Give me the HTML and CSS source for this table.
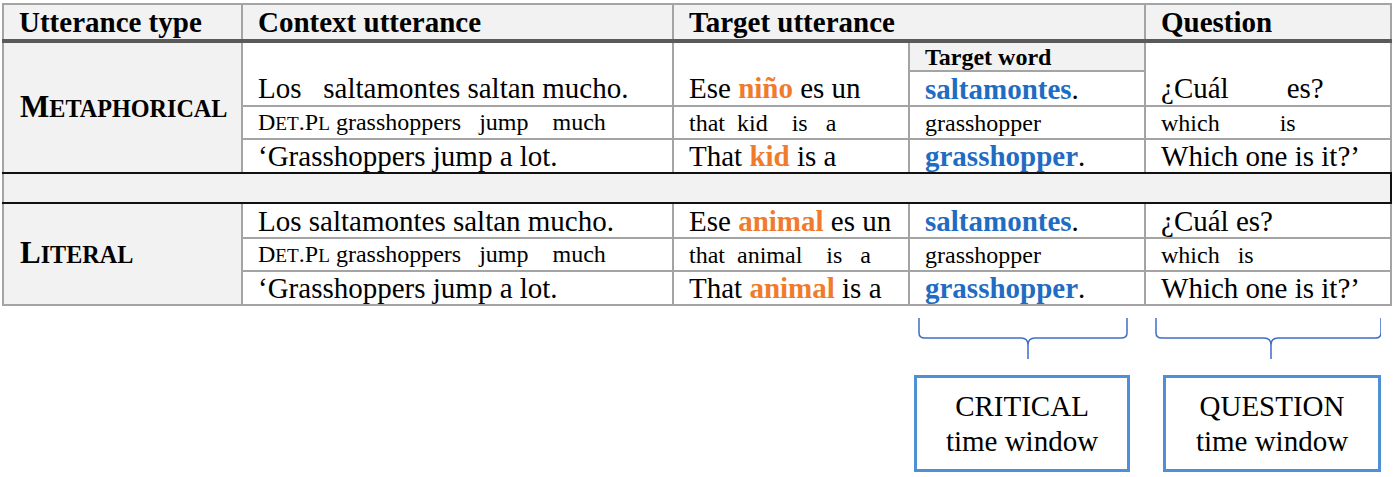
FILE: index.html
```html
<!DOCTYPE html>
<html lang="en">
<head>
<meta charset="utf-8">
<title>Utterance types</title>
<link rel="stylesheet" href="styles.css">
</head>
<body>
<div class="page">
  <table class="grid">
    <colgroup>
      <col class="c1"><col class="c2"><col class="c3"><col class="c4"><col class="c5">
    </colgroup>
    <thead>
      <tr class="r-head">
        <th>Utterance type</th>
        <th>Context utterance</th>
        <th colspan="2">Target utterance</th>
        <th>Question</th>
      </tr>
    </thead>
    <tbody>
      <tr class="r-m1a">
        <td rowspan="4" class="label last">M<span class="sc">ETAPHORICAL</span></td>
        <td rowspan="2" class="big bottom">Los   saltamontes saltan mucho.</td>
        <td rowspan="2" class="big bottom">Ese <b class="or">niño</b> es un</td>
        <td class="tw">Target word</td>
        <td rowspan="2" class="big bottom">¿Cuál        es?</td>
      </tr>
      <tr class="r-m1b">
        <td class="big"><b class="bl">saltamontes</b>.</td>
      </tr>
      <tr class="r-m2">
        <td class="small">D<span class="ssc">ET</span>.P<span class="ssc">L</span> grasshoppers   jump    much</td>
        <td class="small">that  kid    is   a</td>
        <td class="small">grasshopper</td>
        <td class="small">which          is</td>
      </tr>
      <tr class="r-m3">
        <td class="big last">‘Grasshoppers jump a lot.</td>
        <td class="big last">That <b class="or">kid</b> is a</td>
        <td class="big last"><b class="bl">grasshopper</b>.</td>
        <td class="big last">Which one is it?’</td>
      </tr>
      <tr class="r-sep">
        <td colspan="5" class="sep"></td>
      </tr>
      <tr class="r-l1">
        <td rowspan="3" class="label">L<span class="sc">ITERAL</span></td>
        <td class="big">Los saltamontes saltan mucho.</td>
        <td class="big">Ese <b class="or">animal</b> es un</td>
        <td class="big"><b class="bl">saltamontes</b>.</td>
        <td class="big">¿Cuál es?</td>
      </tr>
      <tr class="r-l2">
        <td class="small">D<span class="ssc">ET</span>.P<span class="ssc">L</span> grasshoppers   jump    much</td>
        <td class="small">that  animal    is   a</td>
        <td class="small">grasshopper</td>
        <td class="small">which   is</td>
      </tr>
      <tr class="r-l3">
        <td class="big">‘Grasshoppers jump a lot.</td>
        <td class="big">That <b class="or">animal</b> is a</td>
        <td class="big"><b class="bl">grasshopper</b>.</td>
        <td class="big">Which one is it?’</td>
      </tr>
    </tbody>
  </table>

  <div class="annot">
    <svg class="braces" width="467" height="46" viewBox="0 0 467 46" aria-hidden="true">
      <path d="M5,3 V18 Q5,23 11,23 H107 Q114,23 114,30 V44 M114,30 Q114,23 121,23 H207 Q213,23 213,18 V3" />
      <path d="M242,3 V18 Q242,23 248,23 H350 Q357,23 357,30 V44 M357,30 Q357,23 364,23 H461 Q467,23 467,18 V3" />
    </svg>
    <div class="boxes">
      <div class="box b1">CRITICAL<br>time window</div>
      <div class="box b2">QUESTION<br>time window</div>
    </div>
  </div>
</div>
</body>
</html>
```

FILE: styles.css
```css
body {
  margin: 0;
  background: #ffffff;
  color: #000000;
  font-family: "Liberation Serif", "Times New Roman", serif;
}

.page {
  padding: 3px 0 0 2px;
}

.grid {
  border-collapse: collapse;
  table-layout: fixed;
  width: 1388px;
  border: 2px solid #8e8e8e;
}

.c1 { width: 239px; }
.c2 { width: 431px; }
.c3 { width: 236px; }
.c4 { width: 236px; }
.c5 { width: 246px; }

.grid th,
.grid td {
  border: 2px solid #a4a4a4;
  padding: 0 0 0 15px;
  white-space: pre;
  text-align: left;
  vertical-align: middle;
  overflow: hidden;
}

.grid th {
  background: #f2f2f2;
  font-weight: bold;
  font-size: 29px;
  line-height: 32px;
  border-bottom: 4px solid #5a5a5a;
}

.r-head { height: 37px; }
.r-m1a { height: 30px; }
.r-m1b { height: 35px; }
.r-m2 { height: 33px; }
.r-m3 { height: 34px; }
.r-sep { height: 30px; }
.r-l1 { height: 35px; }
.r-l2 { height: 33px; }
.r-l3 { height: 34px; }

.big {
  font-size: 29px;
  line-height: 30px;
}

.small {
  font-size: 24px;
  line-height: 28px;
}

.bottom {
  vertical-align: bottom !important;
  padding-bottom: 2px !important;
}

.tw {
  background: #f2f2f2;
  font-weight: bold;
  font-size: 24px;
  line-height: 26px;
}

.label {
  background: #f2f2f2;
  font-weight: bold;
  font-size: 31px;
  line-height: 34px;
  padding-left: 16px !important;
}

.sc {
  font-size: 0.78em;
}

.ssc {
  font-size: 0.8em;
}

.grid td.last {
  border-bottom: 2px solid #111111;
}

.grid td.sep {
  background: #f2f2f2;
  border-top: 2px solid #111111;
  border-bottom: 2px solid #111111;
  border-right: 2px solid #111111;
}

.or {
  color: #f07b2d;
  font-weight: bold;
}

.bl {
  color: #1f6cc2;
  font-weight: bold;
}

.annot {
  margin-left: 912px;
  margin-top: 9px;
  display: flex;
  flex-direction: column;
}

.braces {
  display: block;
  fill: none;
  stroke: #3f6ec5;
  stroke-width: 1.5;
}

.boxes {
  display: flex;
  gap: 33px;
  margin-top: 14px;
}

.box {
  box-sizing: border-box;
  height: 97px;
  border: 3px solid #4f8fd6;
  display: flex;
  align-items: center;
  justify-content: center;
  text-align: center;
  font-size: 29px;
  line-height: 35px;
}

.b1 { width: 216px; }
.b2 { width: 218px; }
```
